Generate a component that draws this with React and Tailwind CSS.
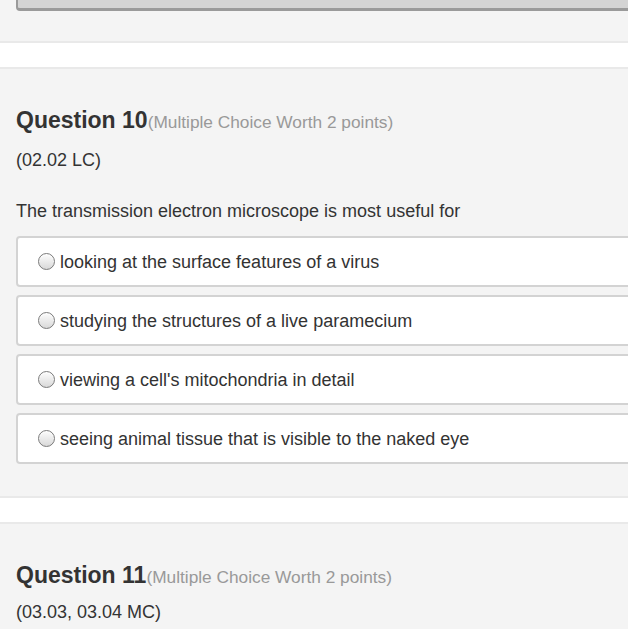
import React from "react";

const font = { fontFamily: '"Liberation Sans", Arial, Helvetica, sans-serif' };

function Radio() {
  return (
    <span className="inline-block w-[17px] h-[17px] rounded-full border border-[#7a7a7a] bg-gradient-to-b from-[#fdfdfd] to-[#d9d9d9] shrink-0 shadow-[inset_0_1px_1px_rgba(255,255,255,0.9)]" />
  );
}

function Option({ text }) {
  return (
    <div className="h-[51px] ml-4 -mr-2 flex items-center gap-[5px] pl-[20px] bg-white border-2 border-[#d3d3d3] rounded-[4px]">
      <Radio />
      <span className="text-[18px] leading-[24px] text-[#333]">{text}</span>
    </div>
  );
}

function Separator() {
  return (
    <div className="h-[28px] bg-white border-t-2 border-b-2 border-[#e9e9e9]" />
  );
}

function Heading({ n }) {
  return (
    <div className="px-4 flex items-baseline leading-[28px]">
      <span className="text-[23px] font-bold text-[#333]">Question {n}</span>
      <span className="text-[17.3px] text-[#999]">(Multiple Choice Worth 2 points)</span>
    </div>
  );
}

export default function App() {
  return (
    <div className="w-[628px] h-[629px] overflow-hidden bg-[#f4f4f4]" style={font}>
      <div className="h-[41px]">
        <div className="ml-4 h-[11px] bg-[#d4d4d4] border-l-2 border-b-[3px] border-[#9a9a9a] rounded-bl-[4px]" />
      </div>
      <Separator />
      <div className="pt-[37px] pb-[32px]">
        <Heading n={10} />
        <div className="px-4 mt-[12px] text-[18px] leading-[24px] text-[#333]">(02.02 LC)</div>
        <div className="px-4 mt-[27px] text-[18px] leading-[24px] text-[#333]">The transmission electron microscope is most useful for</div>
        <div className="mt-[13px] flex flex-col gap-[8px]">
          <Option text="looking at the surface features of a virus" />
          <Option text="studying the structures of a live paramecium" />
          <Option text="viewing a cell's mitochondria in detail" />
          <Option text="seeing animal tissue that is visible to the naked eye" />
        </div>
      </div>
      <Separator />
      <div className="pt-[37px]">
        <Heading n={11} />
        <div className="px-4 mt-[9px] text-[18px] leading-[24px] text-[#333]">(03.03, 03.04 MC)</div>
      </div>
    </div>
  );
}
